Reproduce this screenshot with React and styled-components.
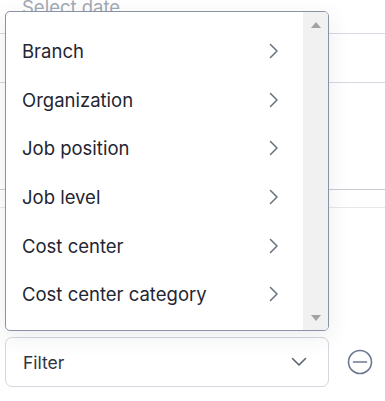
import styled, { createGlobalStyle } from "styled-components";

const GlobalStyle = createGlobalStyle`
  html, body {
    margin: 0;
    padding: 0;
    background: #ffffff;
  }
  body {
    font-family: Inter, "Noto Sans", "Liberation Sans", sans-serif;
  }
`;

const Page = styled.div`
  position: relative;
  width: 385px;
  height: 401px;
  overflow: hidden;
  background: #ffffff;
  display: flex;
  flex-direction: column;
`;

const DateField = styled.div`
  margin-top: -3px;
  height: 37px;
  padding-left: 22px;
  border-bottom: 1px solid #d5d9e0;
  box-sizing: border-box;
  font-size: 18.5px;
  line-height: 20px;
  color: #a3a9b4;
`;

const Blank = styled.div`
  height: ${(p) => p.$h}px;
  border-bottom: ${(p) => (p.$line ? `1px solid ${p.$line}` : "none")};
  box-sizing: border-box;
`;

const CutLabel = styled.div`
  margin-left: -6px;
  height: 14px;
  font-size: 14px;
  line-height: 14px;
  color: #a0623e;
`;

const FilterRow = styled.div`
  display: flex;
  align-items: center;
  gap: 18px;
  padding-left: 5px;
  margin-top: auto;
  margin-bottom: 14px;
`;

const Select = styled.div`
  width: 324px;
  height: 50px;
  box-sizing: border-box;
  border: 1px solid #d3d7de;
  border-radius: 7px;
  display: flex;
  align-items: center;
  justify-content: space-between;
  padding: 0 21px 0 17px;
  font-size: 17.5px;
  color: #2f3541;
`;

const Menu = styled.div`
  position: absolute;
  left: 5px;
  top: 11px;
  width: 324px;
  height: 320px;
  box-sizing: border-box;
  border: 1px solid #8a93a6;
  border-radius: 5px;
  background: #ffffff;
  box-shadow: 0 6px 22px rgba(30, 40, 60, 0.09);
  display: flex;
  overflow: hidden;
`;

const List = styled.ul`
  flex: 1;
  list-style: none;
  margin: 0;
  padding: 15px 0 0 0;
`;

const Item = styled.li`
  height: 48.6px;
  display: flex;
  align-items: center;
  justify-content: space-between;
  padding: 0 24px 0 16px;
  font-size: 18.5px;
  color: #1f2532;
`;

const Scrollbar = styled.div`
  width: 25px;
  background: #f1f1f1;
  display: flex;
  flex-direction: column;
  align-items: center;
  justify-content: space-between;
  padding: 10px 0 9px;
  box-sizing: border-box;
`;

const Arrow = styled.div`
  width: 0;
  height: 0;
  border-left: 5px solid transparent;
  border-right: 5px solid transparent;
  ${(p) =>
    p.$up
      ? "border-bottom: 6px solid #a3a3a3;"
      : "border-top: 6px solid #a3a3a3;"}
`;

const ChevronRight = () => (
  <svg width="10" height="16" viewBox="0 0 10 16" fill="none">
    <polyline points="1.5,1.5 8,8 1.5,14.5" stroke="#687080" strokeWidth="1.5" strokeLinecap="round" strokeLinejoin="round" />
  </svg>
);

const ChevronDown = () => (
  <svg width="16" height="10" viewBox="0 0 16 10" fill="none">
    <polyline points="1.5,1.5 8,8 14.5,1.5" stroke="#5b6270" strokeWidth="1.6" strokeLinecap="round" strokeLinejoin="round" />
  </svg>
);

const MinusCircle = () => (
  <svg width="26" height="26" viewBox="0 0 26 26" fill="none">
    <circle cx="13" cy="13" r="11.5" stroke="#6d7890" strokeWidth="1.6" />
    <line x1="6.5" y1="13" x2="19.5" y2="13" stroke="#6d7890" strokeWidth="1.6" strokeLinecap="round" />
  </svg>
);

const items = [
  "Branch",
  "Organization",
  "Job position",
  "Job level",
  "Cost center",
  "Cost center category",
];

const App = () => {
  return (
    <>
      <GlobalStyle />
      <Page>
        <DateField>Select date</DateField>
        <Blank $h={49} $line="#d5d9e0" />
        <Blank $h={107} $line="#c9cdd5" />
        <Blank $h={18} $line="#e6e8ec" />
        <Blank $h={57} />
        <CutLabel>i</CutLabel>

        <FilterRow>
          <Select>
            Filter
            <ChevronDown />
          </Select>
          <MinusCircle />
        </FilterRow>

        <Menu>
          <List>
            {items.map((label) => (
              <Item key={label}>
                {label}
                <ChevronRight />
              </Item>
            ))}
          </List>
          <Scrollbar>
            <Arrow $up />
            <Arrow />
          </Scrollbar>
        </Menu>
      </Page>
    </>
  );
};

export default App;
